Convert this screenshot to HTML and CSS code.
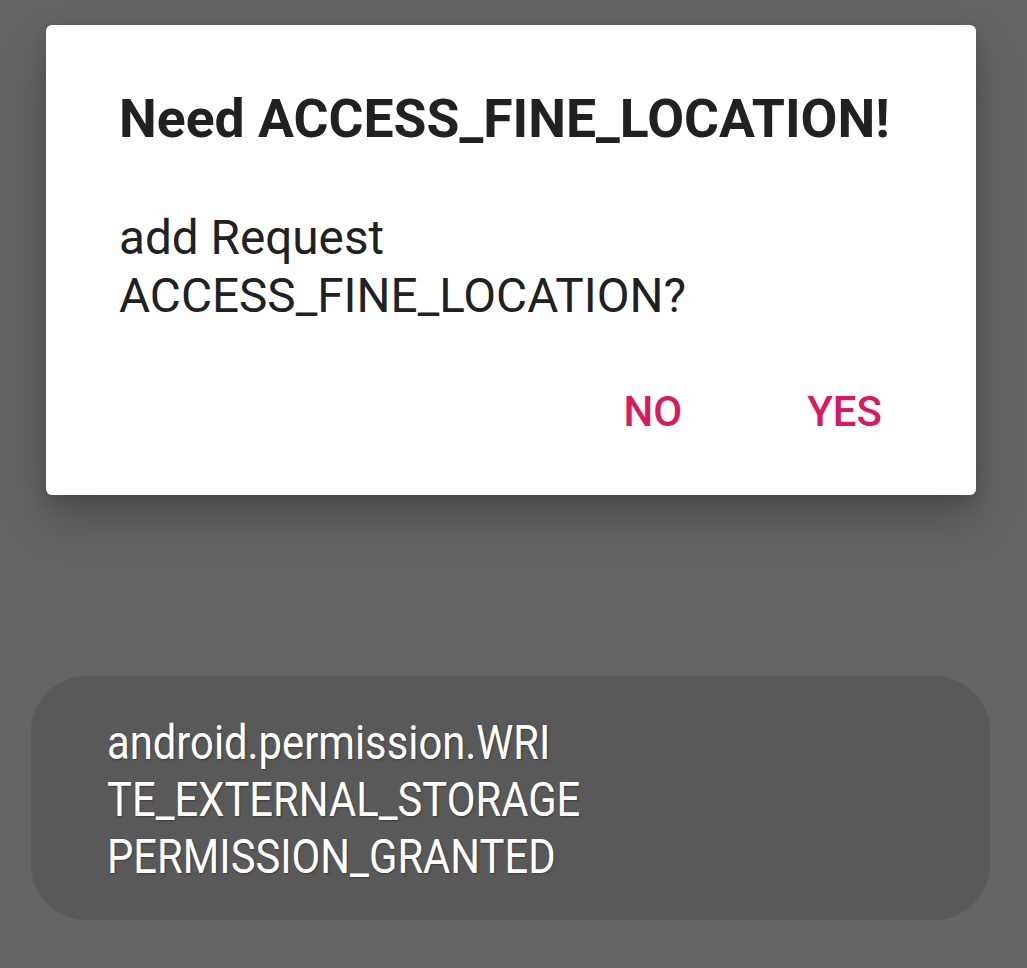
FILE: index.html
```html
<!DOCTYPE html>
<html lang="en">
<head>
  <meta charset="UTF-8" />
  <meta name="viewport" content="width=device-width, initial-scale=1.0" />
  <title>Permission dialog</title>
  <link rel="stylesheet" href="styles.css">
</head>
<body>
  <div class="screen">
    <div class="dialog">
      <h1 class="dialog-title">Need ACCESS_FINE_LOCATION!</h1>
      <p class="dialog-message">add Request<br>ACCESS_FINE_LOCATION?</p>
      <div class="dialog-actions">
        <button class="dialog-btn">NO</button>
        <button class="dialog-btn">YES</button>
      </div>
    </div>

    <div class="toast">
      <p class="toast-text">android.permission.WRI<br>TE_EXTERNAL_STORAGE<br>PERMISSION_GRANTED</p>
    </div>
  </div>
</body>
</html>
```

FILE: styles.css
```css
html, body {
  margin: 0;
  padding: 0;
  background-color: #646464;
}
body {
  font-family: Roboto, "Noto Sans", sans-serif;
}
.screen {
  width: 1027px;
  height: 968px;
  padding-top: 25px;
  box-sizing: border-box;
}
.dialog {
  margin-left: 46px;
  width: 930px;
  height: 470px;
  box-sizing: border-box;
  background-color: #fff;
  border-radius: 6px;
  box-shadow: 0 24px 48px rgba(0, 0, 0, 0.22), 0 6px 16px rgba(0, 0, 0, 0.12);
  padding: 0 0 0 73px;
}
.dialog-title {
  margin: 0;
  padding-top: 64px;
  font-size: 53.5px;
  font-weight: 700;
  line-height: 60px;
  color: #212121;
}
.dialog-message {
  margin: 0;
  margin-top: 60px;
  font-size: 47.7px;
  line-height: 58px;
  color: #212121;
}
.dialog-actions {
  display: flex;
  justify-content: flex-end;
  gap: 125px;
  padding-right: 94px;
  margin-top: 62px;
}
.dialog-btn {
  border: none;
  background: none;
  padding: 0;
  font-family: Roboto, sans-serif;
  font-size: 42px;
  font-weight: 500;
  color: #d81b60;
}
.toast {
  margin: 181px 37px 0 31px;
  height: 244px;
  box-sizing: border-box;
  background-color: #595959;
  border-radius: 56px;
  padding: 38px 0 0 76px;
}
.toast-text {
  margin: 0;
  font-size: 48px;
  line-height: 57px;
  color: #fff;
  text-shadow: 1px 1px 2px rgba(0, 0, 0, 0.35);
  transform: scaleX(0.87);
  transform-origin: left top;
  white-space: nowrap;
}
```
